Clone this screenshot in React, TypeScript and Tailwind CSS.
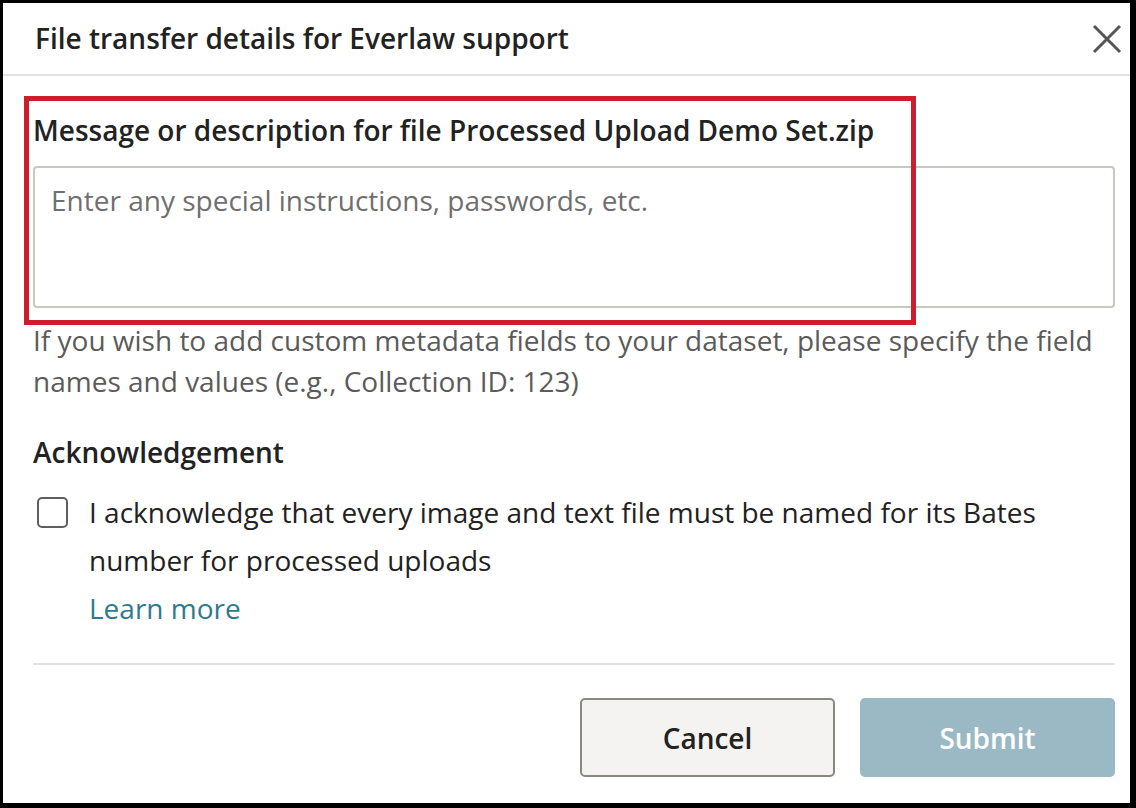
import React from "react";

const font = { fontFamily: '"Open Sans", "Noto Sans", sans-serif' };

export default function App() {
  return (
    <div className="w-[1136px] h-[808px] bg-black pt-[3px] pl-[3px]" style={font}>
      <div className="relative w-[1127px] h-[800px] bg-white flex flex-col">
        {/* header */}
        <div className="h-[73px] border-b-2 border-[#e2e2e2] flex items-center justify-between pl-[32px] pr-[8px] shrink-0">
          <h1 className="text-[28px] leading-[36px] font-semibold text-[#222] -mt-[2px]">
            File transfer details for Everlaw support
          </h1>
          <button aria-label="Close" className="w-[30px] h-[30px] flex items-center justify-center">
            <svg width="30" height="30" viewBox="0 0 30 30" fill="none">
              <path d="M2 2 L28 28 M28 2 L2 28" stroke="#555" strokeWidth="3" />
            </svg>
          </button>
        </div>

        {/* body */}
        <div className="pl-[30px] pr-[15px] pt-[35px] flex flex-col">
          <label className="text-[28px] leading-[38px] font-semibold text-[#222] whitespace-nowrap">
            Message or description for file Processed Upload Demo Set.zip
          </label>
          <div className="mt-[17px] h-[142px] border-2 border-[#c9c7c1] rounded-[4px] px-[16px] pt-[13px] text-[28px] leading-[38px] text-[#6f6f6f]">
            Enter any special instructions, passwords, etc.
          </div>
          <p className="mt-[12px] text-[28px] leading-[41px] text-[#5b5b5b] whitespace-nowrap">
            If you wish to add custom metadata fields to your dataset, please specify the field
            <br />
            names and values (e.g., Collection ID: 123)
          </p>

          <h2 className="mt-[31px] text-[28px] leading-[38px] font-semibold text-[#222]">Acknowledgement</h2>
          <div className="mt-[17px] flex items-start gap-[21px]">
            <div className="mt-[9px] ml-[4px] w-[31px] h-[31px] border-2 border-[#5f5f5f] rounded-[5px] shrink-0" />
            <div className="text-[28px] leading-[48px] text-[#222] whitespace-nowrap">
              I acknowledge that every image and text file must be named for its Bates
              <br />
              number for processed uploads
              <br />
              <a href="#" className="text-[#2f7a8e]">Learn more</a>
            </div>
          </div>

          <div className="mt-[31px] h-[2px] bg-[#e2e2e2]" />

          <div className="mt-[33px] flex justify-end gap-[25px]">
            <button className="w-[255px] h-[79px] bg-[#f4f3f1] border-2 border-[#8b8881] rounded-[5px] text-[28px] font-semibold text-[#222]">
              Cancel
            </button>
            <button className="w-[255px] h-[79px] bg-[#9bb9c4] rounded-[5px] text-[28px] font-semibold text-white">
              Submit
            </button>
          </div>
        </div>

        {/* red annotation box */}
        <div className="absolute left-[21px] top-[93px] w-[892px] h-[229px] border-[5px] border-[#cc1f2d] pointer-events-none" />
      </div>
    </div>
  );
}
